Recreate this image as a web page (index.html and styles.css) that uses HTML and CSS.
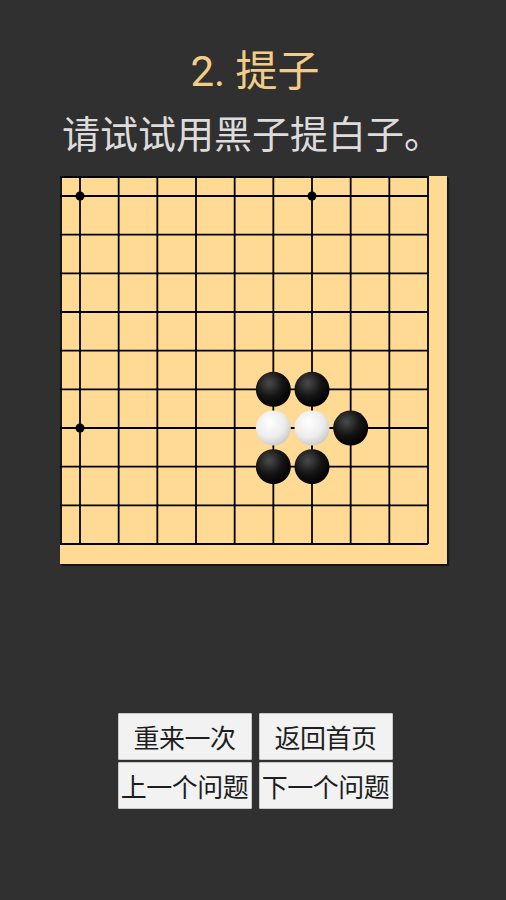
FILE: index.html
```html
<!DOCTYPE html>
<html>
<head>
    <title>提子</title>
    <link rel="stylesheet" href="styles.css">
</head>
<body>

<div class="page">
    <h1 class="title">2. 提子</h1>
    <p class="hint">请试试用黑子提白子。</p>

    <div class="board">
        <svg width="387" height="388" viewBox="0 0 387 388">
            <defs>
                <radialGradient id="blackStone" cx="0.38" cy="0.32" r="0.7">
                    <stop offset="0" stop-color="#4a4a4a"/>
                    <stop offset="0.55" stop-color="#151515"/>
                    <stop offset="1" stop-color="#000"/>
                </radialGradient>
                <radialGradient id="whiteStone" cx="0.4" cy="0.35" r="0.7">
                    <stop offset="0" stop-color="#ffffff"/>
                    <stop offset="0.6" stop-color="#ececec"/>
                    <stop offset="1" stop-color="#c8c8c8"/>
                </radialGradient>
            </defs>
            <g id="grid" stroke="#000" stroke-width="1.8"></g>
            <g id="stars" fill="#000"></g>
            <g id="stones"></g>
        </svg>
    </div>

    <div class="buttons">
        <button class="btn">重来一次</button>
        <button class="btn">返回首页</button>
        <button class="btn">上一个问题</button>
        <button class="btn">下一个问题</button>
    </div>
</div>

<script>
// board window shows lines 0..9, first line 20px in from the edge
const step = 38.667;
const first = 20;
const last = first + 9 * step;
const ns = 'http://www.w3.org/2000/svg';

function el(name, attrs, parent) {
    var node = document.createElementNS(ns, name);
    for (var k in attrs) node.setAttribute(k, attrs[k]);
    parent.appendChild(node);
    return node;
}

function pos(i) {
    return first + i * step;
}

var grid = document.getElementById('grid');
// clipped edge lines
el('line', {x1: 0, y1: 1, x2: last, y2: 1}, grid);
el('line', {x1: 1, y1: 0, x2: 1, y2: last}, grid);
for (let i = 0; i < 10; i++) {
    el('line', {x1: 0, y1: pos(i), x2: last, y2: pos(i)}, grid);
    el('line', {x1: pos(i), y1: 0, x2: pos(i), y2: last}, grid);
}

var stars = document.getElementById('stars');
[[0, 0], [6, 0], [0, 6]].forEach(function(p) {
    el('circle', {cx: pos(p[0]), cy: pos(p[1]), r: 4.5}, stars);
});

var stones = [
    {x: 5, y: 5, c: 'b'}, {x: 6, y: 5, c: 'b'},
    {x: 5, y: 6, c: 'w'}, {x: 6, y: 6, c: 'w'}, {x: 7, y: 6, c: 'b'},
    {x: 5, y: 7, c: 'b'}, {x: 6, y: 7, c: 'b'}
];
var layer = document.getElementById('stones');
stones.forEach(function(s) {
    el('circle', {
        cx: pos(s.x), cy: pos(s.y), r: 17.5,
        fill: s.c === 'b' ? 'url(#blackStone)' : 'url(#whiteStone)'
    }, layer);
});
</script>

</body>
</html>
```

FILE: styles.css
```css
body {
    background-color: #303030;
    margin: 0;
    font-family: 'Noto Sans', 'Noto Sans CJK SC', sans-serif;
}
.page {
    display: flex;
    flex-direction: column;
    align-items: center;
    padding-top: 48px;
}
.title {
    margin: 0 0 0 4px;
    font-family: Roboto, 'Noto Sans CJK SC', sans-serif;
    font-size: 42px;
    line-height: 48px;
    font-weight: normal;
    color: #f3cd88;
}
.hint {
    align-self: flex-start;
    margin: 15px 0 0 62px;
    font-size: 38px;
    line-height: 44px;
    color: #dcdcdc;
}
.board {
    margin-top: 21px;
    width: 387px;
    height: 388px;
    background-color: #ffda95;
    box-shadow: 1px 1px 0 #14120e, 2px 2px 1px rgba(0, 0, 0, 0.5);
}
.board svg {
    display: block;
}
.buttons {
    margin: 149px 0 0 4px;
    display: grid;
    grid-template-columns: 134px 134px;
    column-gap: 7px;
    row-gap: 2px;
}
.btn {
    height: 47px;
    padding: 0;
    background-color: #f2f2f2;
    border: 1px solid #c8c8c8;
    border-radius: 1px;
    font-family: 'Noto Sans CJK SC', sans-serif;
    font-size: 26px;
    letter-spacing: -0.5px;
    color: #1e1e1e;
    white-space: nowrap;
}
```
